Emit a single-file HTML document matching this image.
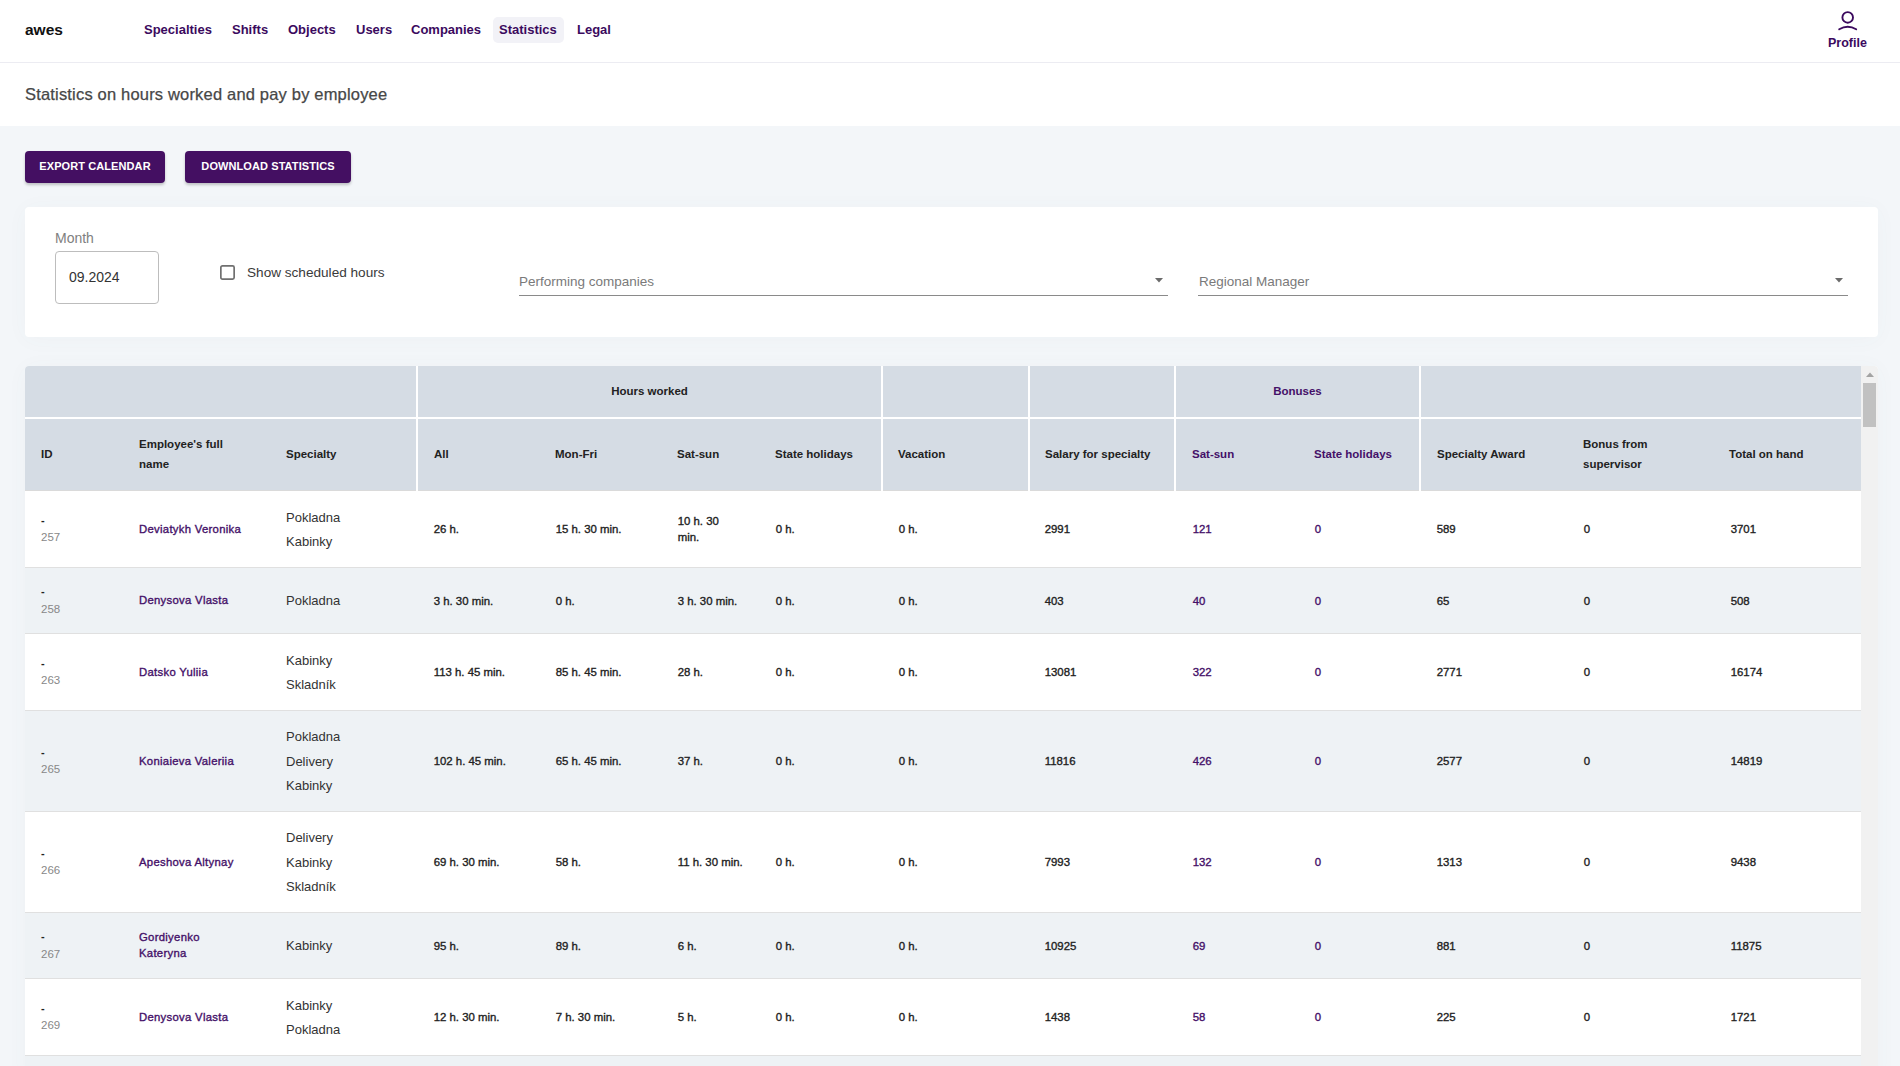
<!DOCTYPE html><html><head><meta charset="utf-8"><style>
*{box-sizing:border-box;margin:0;padding:0}
html,body{width:1900px;height:1066px;overflow:hidden;background:#f3f6f9;font-family:"Liberation Sans",sans-serif;}
.abs{position:absolute}
.hdr{position:absolute;left:0;top:0;width:1900px;height:63px;background:#fff;border-bottom:1px solid #ececf2}
.logo{position:absolute;left:25px;top:21px;font-size:15.5px;font-weight:bold;color:#111;line-height:18px}
.nav{position:absolute;top:22px;font-size:13px;font-weight:bold;color:#3b0a5e;line-height:15px;white-space:nowrap}
.pill{position:absolute;left:493px;top:17px;width:71px;height:26px;background:#f2f2f7;border-radius:5px}
.title{position:absolute;left:0;top:63px;width:1900px;height:63px;background:#fff}
.title span{position:absolute;left:25px;top:21.5px;font-size:16.5px;letter-spacing:0.18px;color:#474747;line-height:18px;white-space:nowrap;-webkit-text-stroke:0.25px #474747}
.btn{position:absolute;top:151px;height:32px;background:#440f62;border-radius:4px;color:#fff;font-size:11px;font-weight:bold;line-height:31px;text-align:center;letter-spacing:0.09px;box-shadow:0 2px 3px rgba(0,0,0,.22)}
.card{position:absolute;left:25px;top:207px;width:1853px;height:130px;background:#fff;border-radius:4px;box-shadow:0 2px 22px rgba(90,100,120,.035)}
.lbl{position:absolute;white-space:nowrap;line-height:16px}
.tblsh{position:absolute;left:25px;top:366px;width:1853px;height:720px;border-radius:4px;box-shadow:0 2px 22px rgba(90,100,120,.035)}
.tbl{position:absolute;left:25px;top:366px;width:1853px;height:700px;background:#fff;border-radius:4px 4px 0 0;overflow:hidden}
.sb{position:absolute;left:1836px;top:0;width:17px;height:700px;background:#f1f1f1}
.row{position:absolute;left:0;width:1836px}
.cell{position:absolute;top:0;bottom:0;display:flex;flex-direction:column;justify-content:center}
.h1,.h2{position:absolute;background:#d5dce4}
.ht{font-size:11.5px;font-weight:bold;color:#222;line-height:20px;white-space:nowrap}
.d{font-size:11.4px;color:#222;line-height:16px;white-space:nowrap;-webkit-text-stroke:0.35px currentColor}
.nm{font-size:11.3px;letter-spacing:0.3px;color:#441068;line-height:16px;white-space:nowrap;-webkit-text-stroke:0.35px currentColor;position:relative;top:-0.5px}
.sp{font-size:13px;color:#333;line-height:24.5px;white-space:nowrap;position:relative;top:1px}
.idd{font-size:11px;font-weight:bold;color:#222;line-height:16px;position:relative;top:-1.5px}
.idn{font-size:11.5px;color:#888;line-height:16px}
.pur{color:#441068}
</style></head><body>
<div class="hdr"></div>
<div class="logo">awes</div>
<div class="pill"></div>
<div class="nav" style="left:144px">Specialties</div>
<div class="nav" style="left:232px">Shifts</div>
<div class="nav" style="left:288px">Objects</div>
<div class="nav" style="left:356px">Users</div>
<div class="nav" style="left:411px">Companies</div>
<div class="nav" style="left:499px">Statistics</div>
<div class="nav" style="left:577px">Legal</div>
<svg class="abs" style="left:1835px;top:8px" width="26" height="26" viewBox="0 0 26 26">
<circle cx="12.7" cy="9.4" r="5.3" fill="none" stroke="#3b0a5e" stroke-width="1.9"/>
<path d="M4.2 21.2 Q12.7 16.2 21.2 21.2" fill="none" stroke="#3b0a5e" stroke-width="1.9" stroke-linecap="round"/>
</svg>
<div class="nav" style="left:1828px;top:36px;font-size:12.5px">Profile</div>
<div class="title"><span>Statistics on hours worked and pay by employee</span></div>
<div class="btn" style="left:25px;width:140px">EXPORT CALENDAR</div>
<div class="btn" style="left:185px;width:166px">DOWNLOAD STATISTICS</div>
<div class="card"></div>
<div class="lbl" style="left:55px;top:230px;font-size:14px;color:#808080">Month</div>
<div class="abs" style="left:55px;top:251px;width:104px;height:53px;border:1px solid #bdbdbd;border-radius:4px;background:#fff"></div>
<div class="lbl" style="left:69px;top:269px;font-size:14px;color:#333">09.2024</div>
<svg class="abs" style="left:220px;top:265px" width="15" height="15" viewBox="0 0 15 15"><rect x="0.85" y="0.85" width="13.3" height="13.3" rx="1.6" fill="none" stroke="#707070" stroke-width="1.7"/></svg>
<div class="lbl" style="left:247px;top:265px;font-size:13.6px;color:#3a3a3a">Show scheduled hours</div>
<div class="lbl" style="left:519px;top:274px;font-size:13.5px;color:#7a7a7a">Performing companies</div>
<div class="abs" style="left:519px;top:295px;width:649px;height:1px;background:#8a8a8a"></div>
<svg class="abs" style="left:1155px;top:278px" width="8" height="5" viewBox="0 0 8 5"><path d="M0 0H8L4 4.5Z" fill="#6b6b6b"/></svg>
<div class="lbl" style="left:1199px;top:274px;font-size:13.5px;color:#7a7a7a">Regional Manager</div>
<div class="abs" style="left:1198px;top:295px;width:650px;height:1px;background:#8a8a8a"></div>
<svg class="abs" style="left:1835px;top:278px" width="8" height="5" viewBox="0 0 8 5"><path d="M0 0H8L4 4.5Z" fill="#6b6b6b"/></svg>
<div class="tblsh"></div>
<div class="tbl">
<div class="h1" style="left:0px;top:0;width:391px;height:51px"></div>
<div class="h2" style="left:0px;top:53px;width:391px;height:72px;border-bottom:1px solid #dadada"></div>
<div class="h1" style="left:393px;top:0;width:463px;height:51px"></div>
<div class="h2" style="left:393px;top:53px;width:463px;height:72px;border-bottom:1px solid #dadada"></div>
<div class="h1" style="left:858px;top:0;width:145px;height:51px"></div>
<div class="h2" style="left:858px;top:53px;width:145px;height:72px;border-bottom:1px solid #dadada"></div>
<div class="h1" style="left:1005px;top:0;width:144px;height:51px"></div>
<div class="h2" style="left:1005px;top:53px;width:144px;height:72px;border-bottom:1px solid #dadada"></div>
<div class="h1" style="left:1151px;top:0;width:243px;height:51px"></div>
<div class="h2" style="left:1151px;top:53px;width:243px;height:72px;border-bottom:1px solid #dadada"></div>
<div class="h1" style="left:1396px;top:0;width:440px;height:51px"></div>
<div class="h2" style="left:1396px;top:53px;width:440px;height:72px;border-bottom:1px solid #dadada"></div>
<div class="ht abs" style="left:393px;width:463px;top:15px;text-align:center">Hours worked</div>
<div class="ht abs pur" style="left:1151px;width:243px;top:15px;text-align:center">Bonuses</div>
<div class="cell" style="left:16px;top:52px;height:72px;bottom:auto"><div class="ht">ID</div></div>
<div class="cell" style="left:114px;top:52px;height:72px;bottom:auto"><div class="ht">Employee's full<br>name</div></div>
<div class="cell" style="left:261px;top:52px;height:72px;bottom:auto"><div class="ht">Specialty</div></div>
<div class="cell" style="left:409px;top:52px;height:72px;bottom:auto"><div class="ht">All</div></div>
<div class="cell" style="left:530px;top:52px;height:72px;bottom:auto"><div class="ht">Mon-Fri</div></div>
<div class="cell" style="left:652px;top:52px;height:72px;bottom:auto"><div class="ht">Sat-sun</div></div>
<div class="cell" style="left:750px;top:52px;height:72px;bottom:auto"><div class="ht">State holidays</div></div>
<div class="cell" style="left:873px;top:52px;height:72px;bottom:auto"><div class="ht">Vacation</div></div>
<div class="cell" style="left:1020px;top:52px;height:72px;bottom:auto"><div class="ht">Salary for specialty</div></div>
<div class="cell" style="left:1167px;top:52px;height:72px;bottom:auto"><div class="ht pur">Sat-sun</div></div>
<div class="cell" style="left:1289px;top:52px;height:72px;bottom:auto"><div class="ht pur">State holidays</div></div>
<div class="cell" style="left:1412px;top:52px;height:72px;bottom:auto"><div class="ht">Specialty Award</div></div>
<div class="cell" style="left:1558px;top:52px;height:72px;bottom:auto"><div class="ht">Bonus from<br>supervisor</div></div>
<div class="cell" style="left:1704px;top:52px;height:72px;bottom:auto"><div class="ht">Total on hand</div></div>
<div class="row" style="top:125px;height:77px;background:#fff;border-bottom:1px solid #e0e0e0">
<div class="cell" style="left:16px"><div class="idd">-</div><div class="idn">257</div></div>
<div class="cell" style="left:114px"><div class="nm">Deviatykh Veronika</div></div>
<div class="cell" style="left:261px"><div class="sp">Pokladna<br>Kabinky</div></div>
<div class="cell" style="left:408.7px"><div class="d">26 h.</div></div>
<div class="cell" style="left:530.7px"><div class="d">15 h. 30 min.</div></div>
<div class="cell" style="left:652.7px"><div class="d">10 h. 30<br>min.</div></div>
<div class="cell" style="left:750.7px"><div class="d">0 h.</div></div>
<div class="cell" style="left:873.7px"><div class="d">0 h.</div></div>
<div class="cell" style="left:1019.7px"><div class="d">2991</div></div>
<div class="cell" style="left:1167.7px"><div class="d pur">121</div></div>
<div class="cell" style="left:1289.7px"><div class="d pur">0</div></div>
<div class="cell" style="left:1411.7px"><div class="d">589</div></div>
<div class="cell" style="left:1558.7px"><div class="d">0</div></div>
<div class="cell" style="left:1705.7px"><div class="d">3701</div></div>
</div>
<div class="row" style="top:202px;height:66px;background:#eef2f5;border-bottom:1px solid #e0e0e0">
<div class="cell" style="left:16px"><div class="idd">-</div><div class="idn">258</div></div>
<div class="cell" style="left:114px"><div class="nm">Denysova Vlasta</div></div>
<div class="cell" style="left:261px"><div class="sp">Pokladna</div></div>
<div class="cell" style="left:408.7px"><div class="d">3 h. 30 min.</div></div>
<div class="cell" style="left:530.7px"><div class="d">0 h.</div></div>
<div class="cell" style="left:652.7px"><div class="d">3 h. 30 min.</div></div>
<div class="cell" style="left:750.7px"><div class="d">0 h.</div></div>
<div class="cell" style="left:873.7px"><div class="d">0 h.</div></div>
<div class="cell" style="left:1019.7px"><div class="d">403</div></div>
<div class="cell" style="left:1167.7px"><div class="d pur">40</div></div>
<div class="cell" style="left:1289.7px"><div class="d pur">0</div></div>
<div class="cell" style="left:1411.7px"><div class="d">65</div></div>
<div class="cell" style="left:1558.7px"><div class="d">0</div></div>
<div class="cell" style="left:1705.7px"><div class="d">508</div></div>
</div>
<div class="row" style="top:268px;height:77px;background:#fff;border-bottom:1px solid #e0e0e0">
<div class="cell" style="left:16px"><div class="idd">-</div><div class="idn">263</div></div>
<div class="cell" style="left:114px"><div class="nm">Datsko Yuliia</div></div>
<div class="cell" style="left:261px"><div class="sp">Kabinky<br>Skladník</div></div>
<div class="cell" style="left:408.7px"><div class="d">113 h. 45 min.</div></div>
<div class="cell" style="left:530.7px"><div class="d">85 h. 45 min.</div></div>
<div class="cell" style="left:652.7px"><div class="d">28 h.</div></div>
<div class="cell" style="left:750.7px"><div class="d">0 h.</div></div>
<div class="cell" style="left:873.7px"><div class="d">0 h.</div></div>
<div class="cell" style="left:1019.7px"><div class="d">13081</div></div>
<div class="cell" style="left:1167.7px"><div class="d pur">322</div></div>
<div class="cell" style="left:1289.7px"><div class="d pur">0</div></div>
<div class="cell" style="left:1411.7px"><div class="d">2771</div></div>
<div class="cell" style="left:1558.7px"><div class="d">0</div></div>
<div class="cell" style="left:1705.7px"><div class="d">16174</div></div>
</div>
<div class="row" style="top:345px;height:101px;background:#eef2f5;border-bottom:1px solid #e0e0e0">
<div class="cell" style="left:16px"><div class="idd">-</div><div class="idn">265</div></div>
<div class="cell" style="left:114px"><div class="nm">Koniaieva Valeriia</div></div>
<div class="cell" style="left:261px"><div class="sp">Pokladna<br>Delivery<br>Kabinky</div></div>
<div class="cell" style="left:408.7px"><div class="d">102 h. 45 min.</div></div>
<div class="cell" style="left:530.7px"><div class="d">65 h. 45 min.</div></div>
<div class="cell" style="left:652.7px"><div class="d">37 h.</div></div>
<div class="cell" style="left:750.7px"><div class="d">0 h.</div></div>
<div class="cell" style="left:873.7px"><div class="d">0 h.</div></div>
<div class="cell" style="left:1019.7px"><div class="d">11816</div></div>
<div class="cell" style="left:1167.7px"><div class="d pur">426</div></div>
<div class="cell" style="left:1289.7px"><div class="d pur">0</div></div>
<div class="cell" style="left:1411.7px"><div class="d">2577</div></div>
<div class="cell" style="left:1558.7px"><div class="d">0</div></div>
<div class="cell" style="left:1705.7px"><div class="d">14819</div></div>
</div>
<div class="row" style="top:446px;height:101px;background:#fff;border-bottom:1px solid #e0e0e0">
<div class="cell" style="left:16px"><div class="idd">-</div><div class="idn">266</div></div>
<div class="cell" style="left:114px"><div class="nm">Apeshova Altynay</div></div>
<div class="cell" style="left:261px"><div class="sp">Delivery<br>Kabinky<br>Skladník</div></div>
<div class="cell" style="left:408.7px"><div class="d">69 h. 30 min.</div></div>
<div class="cell" style="left:530.7px"><div class="d">58 h.</div></div>
<div class="cell" style="left:652.7px"><div class="d">11 h. 30 min.</div></div>
<div class="cell" style="left:750.7px"><div class="d">0 h.</div></div>
<div class="cell" style="left:873.7px"><div class="d">0 h.</div></div>
<div class="cell" style="left:1019.7px"><div class="d">7993</div></div>
<div class="cell" style="left:1167.7px"><div class="d pur">132</div></div>
<div class="cell" style="left:1289.7px"><div class="d pur">0</div></div>
<div class="cell" style="left:1411.7px"><div class="d">1313</div></div>
<div class="cell" style="left:1558.7px"><div class="d">0</div></div>
<div class="cell" style="left:1705.7px"><div class="d">9438</div></div>
</div>
<div class="row" style="top:547px;height:66px;background:#eef2f5;border-bottom:1px solid #e0e0e0">
<div class="cell" style="left:16px"><div class="idd">-</div><div class="idn">267</div></div>
<div class="cell" style="left:114px"><div class="nm">Gordiyenko<br>Kateryna</div></div>
<div class="cell" style="left:261px"><div class="sp">Kabinky</div></div>
<div class="cell" style="left:408.7px"><div class="d">95 h.</div></div>
<div class="cell" style="left:530.7px"><div class="d">89 h.</div></div>
<div class="cell" style="left:652.7px"><div class="d">6 h.</div></div>
<div class="cell" style="left:750.7px"><div class="d">0 h.</div></div>
<div class="cell" style="left:873.7px"><div class="d">0 h.</div></div>
<div class="cell" style="left:1019.7px"><div class="d">10925</div></div>
<div class="cell" style="left:1167.7px"><div class="d pur">69</div></div>
<div class="cell" style="left:1289.7px"><div class="d pur">0</div></div>
<div class="cell" style="left:1411.7px"><div class="d">881</div></div>
<div class="cell" style="left:1558.7px"><div class="d">0</div></div>
<div class="cell" style="left:1705.7px"><div class="d">11875</div></div>
</div>
<div class="row" style="top:613px;height:77px;background:#fff;border-bottom:1px solid #e0e0e0">
<div class="cell" style="left:16px"><div class="idd">-</div><div class="idn">269</div></div>
<div class="cell" style="left:114px"><div class="nm">Denysova Vlasta</div></div>
<div class="cell" style="left:261px"><div class="sp">Kabinky<br>Pokladna</div></div>
<div class="cell" style="left:408.7px"><div class="d">12 h. 30 min.</div></div>
<div class="cell" style="left:530.7px"><div class="d">7 h. 30 min.</div></div>
<div class="cell" style="left:652.7px"><div class="d">5 h.</div></div>
<div class="cell" style="left:750.7px"><div class="d">0 h.</div></div>
<div class="cell" style="left:873.7px"><div class="d">0 h.</div></div>
<div class="cell" style="left:1019.7px"><div class="d">1438</div></div>
<div class="cell" style="left:1167.7px"><div class="d pur">58</div></div>
<div class="cell" style="left:1289.7px"><div class="d pur">0</div></div>
<div class="cell" style="left:1411.7px"><div class="d">225</div></div>
<div class="cell" style="left:1558.7px"><div class="d">0</div></div>
<div class="cell" style="left:1705.7px"><div class="d">1721</div></div>
</div>
<div class="row" style="top:690px;height:40px;background:#eef2f5"></div>
<div class="sb"><svg class="abs" style="left:5px;top:6px" width="8" height="5" viewBox="0 0 8 5"><path d="M0 5H8L4 0.5Z" fill="#a3a3a3"/></svg><div class="abs" style="left:2px;top:17px;width:13px;height:44px;background:#c1c1c1"></div></div>
</div>
</body></html>
